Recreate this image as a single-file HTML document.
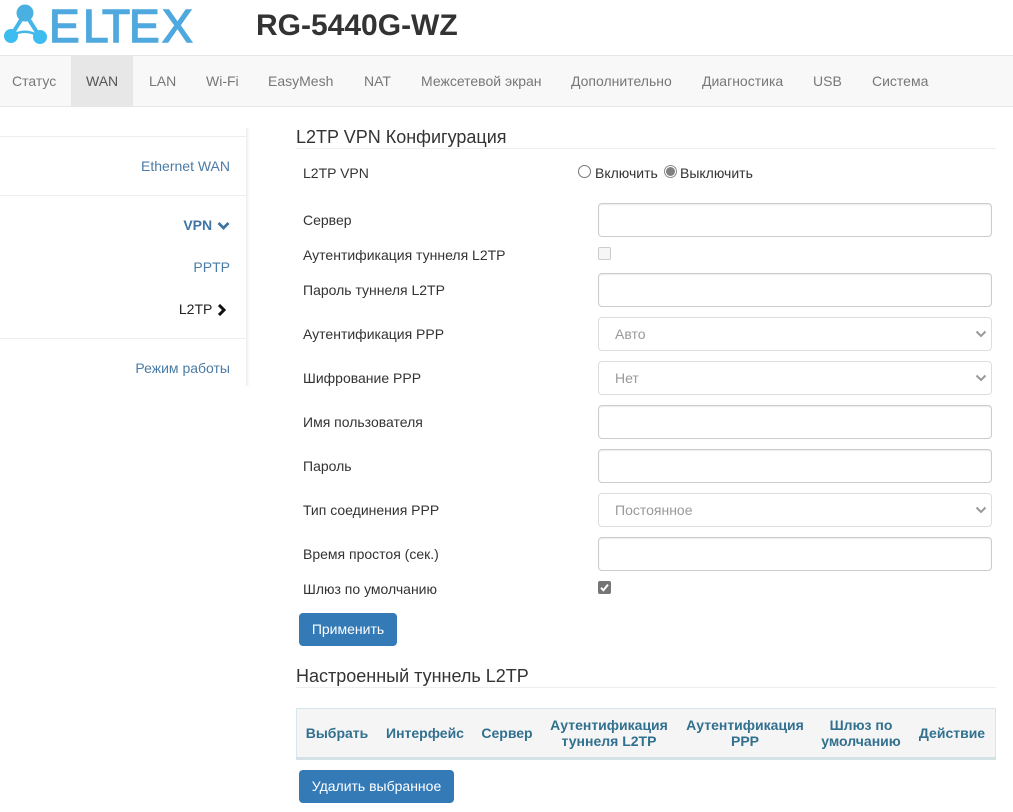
<!DOCTYPE html>
<html><head><meta charset="utf-8">
<style>
html,body{margin:0;padding:0;background:#fff;}
body{width:1013px;height:812px;position:relative;overflow:hidden;font-family:"Liberation Sans",sans-serif;font-size:14px;color:#333;}
.a{position:absolute;white-space:nowrap;line-height:20px;}
.nav{position:absolute;top:55px;left:0;width:1013px;height:50px;background:#f8f8f8;border-top:1px solid #e7e7e7;border-bottom:1px solid #e7e7e7;box-sizing:content-box;}
.n{position:absolute;top:15px;line-height:20px;color:#777;white-space:nowrap;}
.l{position:absolute;left:303px;line-height:20px;color:#333;white-space:nowrap;}
.i{position:absolute;left:598px;width:394px;height:34px;box-sizing:border-box;border:1px solid #ccc;border-radius:4px;background:#fff;box-shadow:inset 0 1px 1px rgba(0,0,0,.075);}
.s{color:#999;line-height:32px;padding-left:16px;box-shadow:none;border-color:#ddd;}
.s svg{position:absolute;right:4px;top:12px;}
.hr{position:absolute;height:1px;background:#eee;}
.h{position:absolute;left:296px;font-size:18px;line-height:20px;color:#333;white-space:nowrap;}
.side{position:absolute;right:783px;line-height:20px;color:#4a7ba6;white-space:nowrap;}
.side svg{vertical-align:-1px;}
.btn{position:absolute;left:299px;height:33px;background:#337ab7;border-radius:4px;color:#fff;line-height:33px;text-align:center;}
.th{position:absolute;font-weight:bold;color:#31708f;text-align:center;line-height:16px;white-space:nowrap;transform:translateX(-50%);}
</style></head>
<body>
<svg class="a" style="left:0;top:0" width="200" height="50" viewBox="0 0 200 50">
<path d="M24 15 L11 36 M26 15 L40 37" stroke="#45b6ea" stroke-width="4" fill="none"/>
<path d="M11 36 Q26 27 40 37" stroke="#45b6ea" stroke-width="2.5" fill="none"/>
<circle cx="25" cy="13" r="8.5" fill="#4ab0e2"/><circle cx="11" cy="36" r="7" fill="#3dbcf0"/><circle cx="40" cy="37" r="7" fill="#3dbcf0"/>
<text y="42" x="49 83 102 129 162" font-family="Liberation Sans" font-size="46" fill="#4fa8de" stroke="#4fa8de" stroke-width="1.4">ELTEX</text>
</svg>
<div class="a" style="left:256px;top:9px;font-size:30px;font-weight:bold;line-height:34px;color:#333">RG-5440G-WZ</div>

<div class="nav">
<div style="position:absolute;left:71px;top:0;width:62px;height:50px;background:#e7e7e7"></div>
<span class="n" style="left:12px">Статус</span>
<span class="n" style="left:86px;color:#555">WAN</span>
<span class="n" style="left:149px">LAN</span>
<span class="n" style="left:206px">Wi-Fi</span>
<span class="n" style="left:268px">EasyMesh</span>
<span class="n" style="left:364px">NAT</span>
<span class="n" style="left:421px">Межсетевой экран</span>
<span class="n" style="left:571px">Дополнительно</span>
<span class="n" style="left:702px">Диагностика</span>
<span class="n" style="left:813px">USB</span>
<span class="n" style="left:872px">Система</span>
</div>

<div style="position:absolute;left:246px;top:128px;width:4px;height:258px;background:linear-gradient(to right,#eeeeee,#fff)"></div>
<div class="hr" style="left:0;top:136px;width:246px"></div>
<div class="hr" style="left:0;top:195px;width:246px"></div>
<div class="hr" style="left:0;top:338px;width:246px"></div>
<div class="side" style="top:156px">Ethernet WAN</div>
<div class="side" style="top:215px;font-weight:bold;color:#3f76a6">VPN <svg width="13" height="10" viewBox="0 0 13 10" style="margin-left:1px"><path d="M1.5 2 L6.5 7 L11.5 2" fill="none" stroke="#3f76a6" stroke-width="2.8"/></svg></div>
<div class="side" style="top:257px">PPTP</div>
<div class="side" style="top:299px;color:#222">L2TP <svg width="10" height="12" viewBox="0 0 10 12" style="margin-left:1px;margin-right:3px;vertical-align:-2px"><path d="M2 1 L7 6 L2 11" fill="none" stroke="#111" stroke-width="3"/></svg></div>
<div class="side" style="top:358px">Режим работы</div>

<div class="h" style="top:127px">L2TP VPN Конфигурация</div>
<div class="hr" style="left:296px;top:148px;width:700px"></div>

<div class="l" style="top:163px">L2TP VPN</div>
<svg class="a" style="left:578px;top:165px" width="14" height="14"><circle cx="6.5" cy="6.5" r="6" fill="#fff" stroke="#767676"/></svg>
<div class="a" style="left:595px;top:163px">Включить</div>
<svg class="a" style="left:664px;top:165px" width="14" height="14"><circle cx="6.5" cy="6.5" r="6" fill="#fff" stroke="#8a8a8a"/><circle cx="6.5" cy="6.5" r="4.5" fill="#808080"/></svg>
<div class="a" style="left:680px;top:163px">Выключить</div>

<div class="l" style="top:210px">Сервер</div><div class="i" style="top:203px"></div>
<div class="l" style="top:245px">Аутентификация туннеля L2TP</div>
<div class="a" style="left:598px;top:247px;width:13px;height:13px;box-sizing:border-box;border:1px solid #ccc;border-radius:2px;background:#f6f6f6"></div>
<div class="l" style="top:280px">Пароль туннеля L2TP</div><div class="i" style="top:273px"></div>
<div class="l" style="top:324px">Аутентификация PPP</div>
<div class="i s" style="top:317px">Авто<svg width="12" height="9" viewBox="0 0 12 9"><path d="M1.5 1.5 L6 6 L10.5 1.5" fill="none" stroke="#999" stroke-width="2"/></svg></div>
<div class="l" style="top:368px">Шифрование PPP</div>
<div class="i s" style="top:361px">Нет<svg width="12" height="9" viewBox="0 0 12 9"><path d="M1.5 1.5 L6 6 L10.5 1.5" fill="none" stroke="#999" stroke-width="2"/></svg></div>
<div class="l" style="top:412px">Имя пользователя</div><div class="i" style="top:405px"></div>
<div class="l" style="top:456px">Пароль</div><div class="i" style="top:449px"></div>
<div class="l" style="top:500px">Тип соединения PPP</div>
<div class="i s" style="top:493px">Постоянное<svg width="12" height="9" viewBox="0 0 12 9"><path d="M1.5 1.5 L6 6 L10.5 1.5" fill="none" stroke="#999" stroke-width="2"/></svg></div>
<div class="l" style="top:544px">Время простоя (сек.)</div><div class="i" style="top:537px"></div>
<div class="l" style="top:579px">Шлюз по умолчанию</div>
<svg class="a" style="left:598px;top:581px" width="13" height="13" viewBox="0 0 13 13"><rect width="13" height="13" rx="2" fill="#767676"/><path d="M3 6.8 L5.4 9.3 L10 3.6" fill="none" stroke="#fff" stroke-width="2"/></svg>

<div class="btn" style="top:613px;width:98px">Применить</div>

<div class="h" style="top:666px">Настроенный туннель L2TP</div>
<div class="hr" style="left:296px;top:687px;width:700px"></div>

<div style="position:absolute;left:296px;top:708px;width:700px;height:52px;box-sizing:border-box;background:#f5f5f5;border:1px solid #d4e6ee;border-bottom:3px solid #d5e2e5"></div>
<div class="th" style="left:337px;top:725px">Выбрать</div>
<div class="th" style="left:425px;top:725px">Интерфейс</div>
<div class="th" style="left:507px;top:725px">Сервер</div>
<div class="th" style="left:609px;top:717px">Аутентификация<br>туннеля L2TP</div>
<div class="th" style="left:745px;top:717px">Аутентификация<br>PPP</div>
<div class="th" style="left:861px;top:717px">Шлюз по<br>умолчанию</div>
<div class="th" style="left:952px;top:725px">Действие</div>

<div class="btn" style="top:770px;width:155px">Удалить выбранное</div>
</body></html>
